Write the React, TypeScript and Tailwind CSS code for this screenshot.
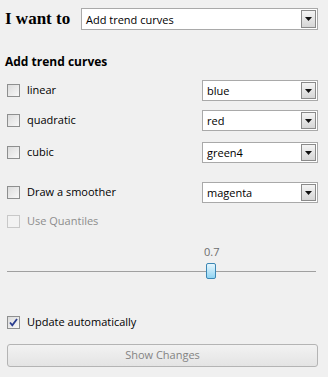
import React from 'react';

const ui = { fontFamily: '"Open Sans", "Noto Sans", sans-serif' };

function Arrow() {
  return (
    <div className="absolute right-[1px] top-[1px] bottom-[1px] w-[15px] border border-[#8a8a8a] bg-gradient-to-b from-[#f4f4f4] to-[#d6d6d6] flex items-center justify-center">
      <svg width="7" height="4" viewBox="0 0 7 4">
        <path d="M0 0h7L3.5 4z" fill="#111" />
      </svg>
    </div>
  );
}

function Combo({ value, className }: { value: string; className: string }) {
  return (
    <div className={`relative bg-white border border-[#a9a9a9] flex items-center pl-[4px] text-[11px] text-black ${className}`}>
      <span className="leading-none">{value}</span>
      <Arrow />
    </div>
  );
}

function Check({ checked = false, disabled = false }: { checked?: boolean; disabled?: boolean }) {
  return (
    <div
      className={`w-[13px] h-[13px] border flex items-center justify-center ${
        disabled ? 'border-[#c8c8c8] bg-[#f2f2f2]' : 'border-[#8e8f8f] bg-gradient-to-br from-[#dcdcdc] to-[#f8f8f8]'
      }`}
    >
      {checked && (
        <svg width="9" height="9" viewBox="0 0 9 9">
          <path d="M1 4.5l2.3 2.8L8 1" fill="none" stroke="#2a3d8f" strokeWidth="1.8" />
        </svg>
      )}
    </div>
  );
}

function Row({ label, value, className }: { label: string; value: string; className: string }) {
  return (
    <div className={`flex items-center h-[21px] pl-[7px] pr-[10px] ${className}`}>
      <Check />
      <span className="ml-[7px] text-[11px] text-black flex-1">{label}</span>
      <Combo value={value} className="w-[116px] h-[21px]" />
    </div>
  );
}

export default function App() {
  return (
    <div className="w-[328px] h-[377px] bg-[#f0f0f0] overflow-hidden pt-2" style={ui}>
      <div className="flex items-center h-[22px] pl-[5px] pr-[10px]">
        <span className="text-[17px] font-bold text-black w-[76px]" style={{ fontFamily: '"Liberation Serif", serif' }}>
          I want to
        </span>
        <Combo value="Add trend curves" className="flex-1 h-[22px]" />
      </div>

      <div className="mt-[23px] h-[18px] pl-[5px] text-[12px] font-bold text-black leading-[18px]">Add trend curves</div>

      <Row label="linear" value="blue" className="mt-[9px]" />
      <Row label="quadratic" value="red" className="mt-[9px]" />
      <Row label="cubic" value="green4" className="mt-[11px]" />
      <Row label="Draw a smoother" value="magenta" className="mt-[19px]" />

      <div className="mt-[10px] h-[16px] flex items-center pl-[7px]">
        <Check disabled />
        <span className="ml-[7px] text-[11px] text-[#8d8d8d]">Use Quantiles</span>
      </div>

      <div className="mt-[16px] h-[14px] pl-[204px] text-[11px] leading-[14px] text-[#6d6d6d]">0.7</div>

      <div className="mt-[4px] relative h-[16px] ml-[7px] mr-[12px]">
        <div className="absolute left-0 right-0 top-[8px] h-px bg-[#a0a0a0]" />
        <div className="absolute left-[199px] top-0 w-[10px] h-[16px] rounded-[2px] border border-[#3c87b4] bg-gradient-to-b from-[#e6f6fd] to-[#8fd4f2]" />
      </div>

      <div className="mt-[35px] h-[16px] flex items-center pl-[7px]">
        <Check checked />
        <span className="ml-[7px] text-[11px] text-black">Update automatically</span>
      </div>

      <div className="mt-[14px] mx-[7px] mr-[10px] h-[23px] rounded-[3px] border border-[#b4b4b4] bg-gradient-to-b from-[#f2f2f2] to-[#e4e4e4] flex items-center justify-center text-[11px] text-[#838383]">
        Show Changes
      </div>
    </div>
  );
}
